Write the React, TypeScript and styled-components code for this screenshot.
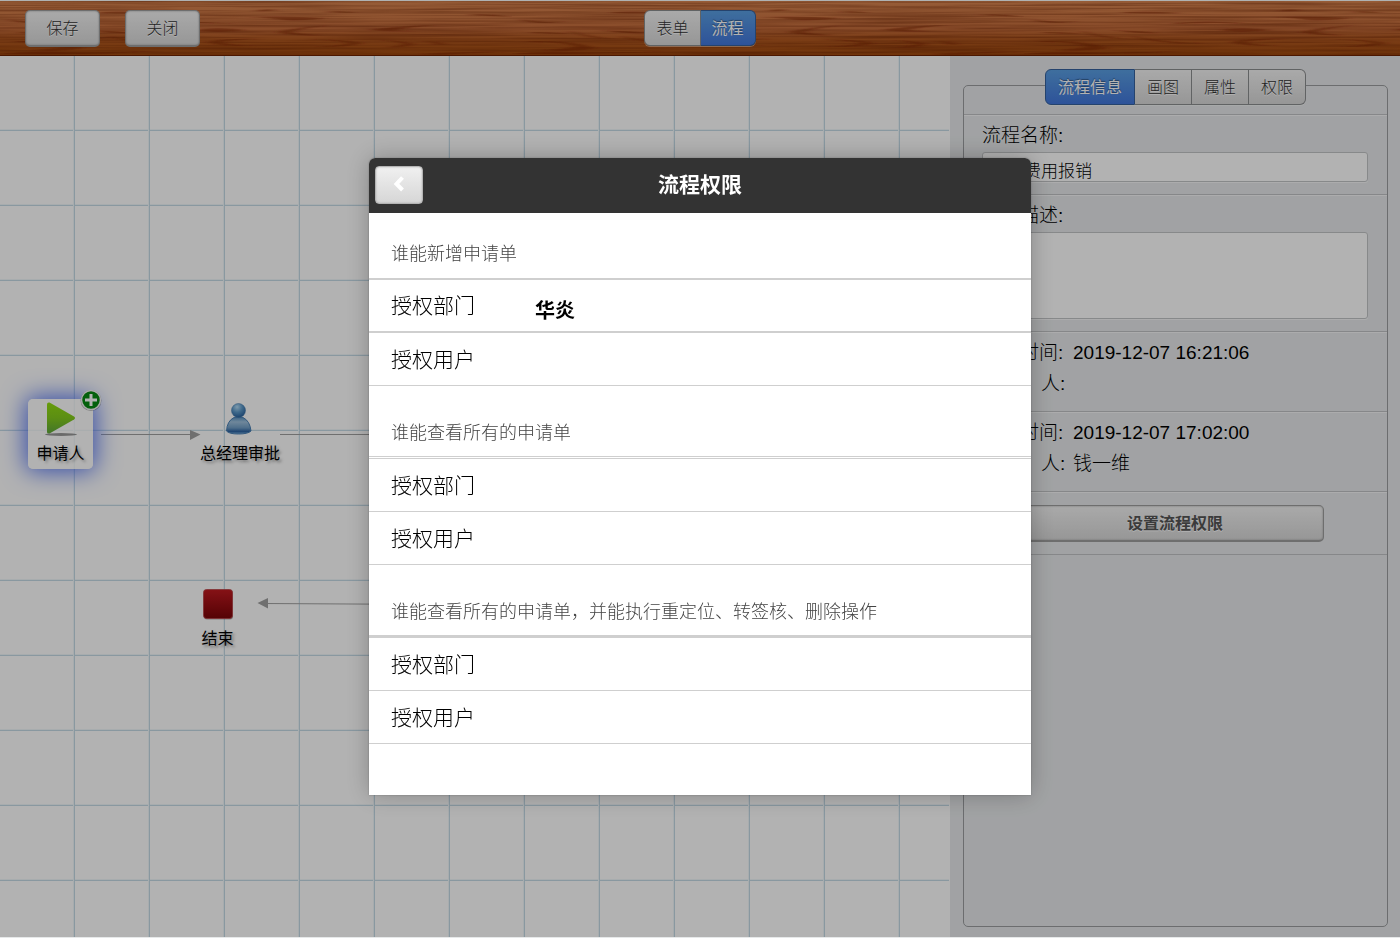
import React from "react";
import styled, { createGlobalStyle, css } from "styled-components";

const GlobalStyle = createGlobalStyle`
  *, *::before, *::after { box-sizing: border-box; }
  body {
    margin: 0;
    background: #e6e8e9;
    color: #000;
    font-family: "Liberation Sans", "Noto Sans CJK SC", sans-serif;
    font-size: 16px;
    font-weight: 300;
  }
  button, input, textarea { font-family: inherit; font-weight: inherit; }
  button { cursor: pointer; }
`;

const Page = styled.div`
  display: flex;
  flex-direction: column;
  min-height: 100vh;
  padding-bottom: 1px;
`;

const TopBar = styled.header`
  position: relative;
  display: grid;
  grid-template-columns: 1fr auto 1fr;
  align-items: start;
  height: 56px;
  padding: 9px 25px 0;
  border-top: 1px solid #fbffff;
`;

const Wood = styled.svg`
  position: absolute;
  inset: 0;
  width: 100%;
  height: 100%;
  z-index: -1;
`;

const Actions = styled.div`
  display: flex;
  gap: 25px;
`;

const softFace = css`
  color: #333;
  background: linear-gradient(#f3f3f3, #d8d8d8);
  text-shadow: 0 1px 0 #fff;
`;

const PushButton = styled.button<{ $bold?: boolean; $width: string }>`
  ${softFace}
  display: block;
  width: ${(p) => p.$width};
  height: 37px;
  padding: 0 0 2px;
  border: 1px solid #9e9e9e;
  border-bottom-width: 2px;
  border-radius: 5px;
  font-size: 16px;
  font-weight: ${(p) => (p.$bold ? 700 : 300)};
  box-shadow: inset 0 0 2px #999;
  ${(p) => p.$bold && "color: #555;"}
`;

const Segments = styled.div`
  display: flex;
`;

const Segment = styled.button<{ $active?: boolean; $roomy?: boolean }>`
  height: 36px;
  padding: 0 ${(p) => (p.$roomy ? 12 : 11)}px 2px;
  border: 1px solid #8c8e90;
  border-left-width: 0;
  font-size: 16px;
  box-shadow: 0 1px 0 rgba(255, 255, 255, 0.4);
  ${softFace}
  ${(p) =>
    p.$active &&
    css`
      color: #fff;
      border-color: #35609c;
      background: linear-gradient(#5a9fe2, #4277dc);
      font-weight: 400;
      text-shadow: 0 -1px 1px rgba(0, 0, 0, 0.4);
    `}
  &:first-child {
    border-left-width: 1px;
    border-radius: 6px 0 0 6px;
  }
  &:last-child {
    border-radius: 0 6px 6px 0;
  }
`;

const Workspace = styled.div`
  display: flex;
  flex: 1;
`;

const Canvas = styled.main`
  position: relative;
  flex: 1;
  min-width: 0;
  overflow: hidden;
  border-right: 1px solid #fff;
  background:
    repeating-linear-gradient(90deg, transparent 0 73px, #f0f6fa 73px 74px, #c4dae6 74px 75px),
    repeating-linear-gradient(180deg, transparent 0 73px, #f0f6fa 73px 74px, #c4dae6 74px 75px),
    #fff;
`;

const Connectors = styled.svg`
  position: absolute;
  top: 0;
  left: 0;
  width: 100%;
  height: 100%;
`;

const Node = styled.div<{ $x: number; $y: number; $selected?: boolean }>`
  position: absolute;
  left: ${(p) => p.$x}px;
  top: ${(p) => p.$y}px;
  display: flex;
  flex-direction: column;
  align-items: center;
  min-width: 65px;
  height: 70px;
  padding-top: 2px;
  border-radius: 5px;
  font-weight: 400;
  line-height: 26px;
  white-space: nowrap;
  text-shadow: 2px 2px 3px rgba(0, 0, 0, 0.4);
  ${(p) =>
    p.$selected &&
    css`
      background: rgba(255, 255, 255, 0.8);
      box-shadow: 0 0 24px 2px #4a6cf0;
    `}
`;

const NodeIcon = styled.svg`
  display: block;
  width: 36px;
  height: 40px;
`;

const Badge = styled.button`
  position: absolute;
  top: -10px;
  right: -9px;
  width: 22px;
  height: 22px;
  padding: 0;
  border: 0;
  background: none;
  svg { display: block; }
`;

const SidePanel = styled.aside`
  flex: 0 0 450px;
  display: flex;
  padding: 29px 12px 10px 13px;
  background: #e7e9eb;
`;

const Frame = styled.section`
  flex: 1;
  border: 1px solid #9b9da0;
  border-radius: 5px;
`;

const FrameHead = styled.div`
  display: flex;
  justify-content: center;
  height: 29px;
  border-bottom: 1px solid #c0c2c4;
  ${Segments} { margin-top: -17px; }
`;

const Block = styled.div`
  padding: 0 19px 12px 18px;
  border-top: 1px solid #f6f7f8;
  border-bottom: 1px solid #c0c2c4;
`;

const FieldLabel = styled.label`
  display: block;
  padding-top: 4px;
  font-size: 19px;
  line-height: 32px;
`;

const fieldBox = css`
  display: block;
  width: 100%;
  padding: 4px 7px 0;
  border: 1px solid #c2c4c6;
  border-radius: 3px;
  background: #fff;
  color: #000;
  font-size: 17px;
  outline: 0;
  box-shadow: 0 1px 0 #f6f7f8;
`;

const TextField = styled.input`
  ${fieldBox}
  height: 30px;
`;

const TextBox = styled.textarea`
  ${fieldBox}
  height: 87px;
  resize: none;
`;

const Facts = styled.dl`
  display: grid;
  grid-template-columns: 91px 1fr;
  margin: 0;
  padding-top: 4px;
  font-size: 19px;
  line-height: 31px;
  dt, dd { margin: 0; white-space: pre; }
`;

const ButtonSlot = styled.div`
  display: flex;
  justify-content: center;
  padding-top: 12px;
`;

const Overlay = styled.div`
  position: fixed;
  inset: 0 0 1px;
  display: flex;
  justify-content: center;
  align-items: flex-start;
  padding-top: 158px;
  background: rgba(0, 0, 0, 0.3);
`;

const Dialog = styled.div`
  width: 662px;
  max-width: 100%;
  padding-bottom: 51px;
  border-radius: 6px 6px 0 0;
  background: #fff;
  box-shadow: 0 0 24px rgba(0, 0, 0, 0.25), 0 0 2px rgba(0, 0, 0, 0.3);
`;

const DialogHead = styled.header`
  display: grid;
  grid-template-columns: 48px 1fr 48px;
  align-items: center;
  height: 55px;
  padding: 0 6px 1px;
  border-radius: 6px 6px 0 0;
  background: #333;
`;

const BackButton = styled.button`
  display: flex;
  align-items: center;
  justify-content: center;
  height: 38px;
  padding: 0 0 2px;
  border: 1px solid #b4b4b4;
  border-radius: 4px;
  background: linear-gradient(#f0f0f0, #d6d6d6);
  box-shadow: inset 0 0 2px #aaa;
`;

const Title = styled.h1`
  margin: 0;
  padding-bottom: 4px;
  color: #fff;
  font-size: 21px;
  font-weight: 700;
  text-align: center;
`;

const Group = styled.section`
  & + & { padding-top: 6px; }
`;

const GroupTitle = styled.h2<{ $rule: string }>`
  height: 67px;
  margin: 0;
  padding: 29px 22px 0;
  border-bottom: ${(p) => p.$rule} #cfcfcf;
  color: #444;
  font-size: 18px;
  font-weight: 300;
  line-height: 24px;
`;

const Row = styled.div<{ $thick?: boolean }>`
  display: grid;
  grid-template-columns: 144px 1fr;
  align-items: center;
  height: 53px;
  padding: 0 22px 3px;
  border-bottom: ${(p) => (p.$thick ? 2 : 1)}px solid #cfcfcf;
  font-size: 21px;
`;

const RowValue = styled.strong`
  padding-top: 10px;
  font-size: 20px;
  font-weight: 700;
`;

const grain = [
  "M8 18 Q28 22 54 20 Q30 24 12 20Z",
  "M20 31 Q45 31 60 33 Q40 33 20 32Z",
  "M58 30 Q80 36 104 38 Q78 38 58 31Z",
  "M92 29 Q110 33 134 32 Q112 29 92 30Z",
  "M16 40 Q60 39 84 47 Q64 51 30 49 Q66 47 62 45 Q50 41 16 41Z",
  "M110 35 Q140 42 180 42 Q140 44 110 36Z",
  "M100 11 Q130 10 156 12 Q128 13 100 12Z",
  "M150 22 Q190 19 235 23 Q190 21 150 23Z",
  "M200 28 Q224 26 246 29 Q224 32 200 30Z",
  "M255 10 Q264 7 277 9 Q264 11 255 10Z",
  "M326 11 Q342 9 358 12 Q342 12 326 11Z",
  "M248 16 Q290 15 328 17 Q308 20 284 19 Q266 16 248 16Z",
  "M276 31 Q300 26 330 24 Q300 28 292 31 Q300 33 320 34 Q292 35 276 31Z",
  "M370 29 Q392 25 436 24 Q404 27 396 29 Q404 30 420 30 Q386 31 370 29Z",
  "M208 41 Q222 37 262 38 Q226 39 222 41 Q230 44 256 45 Q214 45 208 41Z",
  "M310 38 Q350 39 362 42 Q352 46 316 46 Q346 44 348 42 Q342 40 310 38Z",
  "M380 39 Q406 40 414 43 Q404 47 388 46 Q404 44 404 43 Q400 41 380 39Z",
  "M424 40 Q440 40 446 44 Q436 44 434 42Z",
  "M466 14 Q490 12 512 16 Q488 15 466 14Z",
  "M0 53 Q24 50 60 51 Q110 52 160 50 Q110 53 60 53Z",
  "M420 53 Q460 50 512 51 Q470 52 440 54Z",
];

function WoodTexture() {
  return (
    <Wood aria-hidden="true">
      <defs>
        <linearGradient id="woodTone" x1="0" y1="0" x2="0" y2="1">
          <stop offset="0" stopColor="#d88550" />
          <stop offset="0.5" stopColor="#c56d3c" />
          <stop offset="0.7" stopColor="#b05820" />
          <stop offset="1" stopColor="#a04a0e" />
        </linearGradient>
        <filter id="woodFibre" x="0" y="0" width="100%" height="100%" colorInterpolationFilters="sRGB">
          <feTurbulence type="fractalNoise" baseFrequency="0.006 0.45" numOctaves="3" seed="8" />
          <feColorMatrix values="0 0 0 0 0.4  0 0 0 0 0.12  0 0 0 0 0  0.9 0 0 0 -0.3" />
        </filter>
        <filter id="grainBlur">
          <feGaussianBlur stdDeviation="4 0.5" />
        </filter>
        <pattern id="woodGrain" width="512" height="55" patternUnits="userSpaceOnUse">
          <g fill="#7a2400" fillOpacity="0.5" filter="url(#grainBlur)">
            {grain.map((d) => (
              <path key={d} d={d} />
            ))}
          </g>
        </pattern>
      </defs>
      <rect width="100%" height="100%" fill="url(#woodTone)" />
      <rect width="100%" height="100%" filter="url(#woodFibre)" />
      <rect width="100%" height="100%" fill="url(#woodGrain)" />
      <rect y="54" width="100%" height="1" fill="#6e2200" />
    </Wood>
  );
}

function PlayIcon() {
  return (
    <NodeIcon viewBox="0 0 36 40" aria-hidden="true">
      <defs>
        <linearGradient id="play" x1="0" y1="0" x2="0" y2="1">
          <stop offset="0" stopColor="#93df10" />
          <stop offset="0.5" stopColor="#84cc1c" />
          <stop offset="1" stopColor="#5fa83c" />
        </linearGradient>
      </defs>
      <ellipse cx="18" cy="33.500" rx="16" ry="1.5" fill="#555" opacity="0.6" />
      <path d="M4 3.500 Q4 1 6.500 1.500 L31 15.500 Q33 17 31 18.500 L6.500 32.500 Q4 33 4 31Z" fill="url(#play)" />
    </NodeIcon>
  );
}

function PersonIcon() {
  return (
    <NodeIcon viewBox="0 0 36 40" aria-hidden="true">
      <defs>
        <radialGradient id="head" cx="0.4" cy="0.25" r="0.75">
          <stop offset="0" stopColor="#b4dcf6" />
          <stop offset="0.5" stopColor="#5b98c8" />
          <stop offset="1" stopColor="#2a629e" />
        </radialGradient>
        <linearGradient id="body" x1="0" y1="0" x2="0" y2="1">
          <stop offset="0" stopColor="#4f8abc" />
          <stop offset="0.3" stopColor="#a0c2de" />
          <stop offset="0.65" stopColor="#6f9dc6" />
          <stop offset="0.85" stopColor="#2d63a2" />
          <stop offset="1" stopColor="#74aad8" />
        </linearGradient>
      </defs>
      <path d="M4.500 30 Q5 20 12 16.500 Q16.500 15 21 16.500 Q28 20 29 30 Q26 33 16.500 33 Q7 33 4.500 30Z" fill="url(#body)" stroke="#4a80b4" strokeWidth="1" />
      <circle cx="16.500" cy="9.500" r="7" fill="url(#head)" stroke="#3f76aa" strokeWidth="0.500" />
    </NodeIcon>
  );
}

function StopIcon() {
  return (
    <NodeIcon viewBox="0 0 36 40" aria-hidden="true">
      <defs>
        <linearGradient id="stop" x1="0" y1="0" x2="0" y2="1">
          <stop offset="0" stopColor="#c01a20" />
          <stop offset="1" stopColor="#7a0408" />
        </linearGradient>
      </defs>
      <rect x="4" y="4.500" width="29" height="29" rx="3" fill="#000" opacity="0.3" />
      <rect x="3.500" y="3.500" width="29" height="29" rx="3" fill="url(#stop)" stroke="#b8454a" strokeWidth="0.800" />
    </NodeIcon>
  );
}

const groups = [
  {
    title: "谁能新增申请单",
    rule: "2px solid",
    rows: [
      { label: "授权部门", value: "华炎", thick: true },
      { label: "授权用户" },
    ],
  },
  {
    title: "谁能查看所有的申请单",
    rule: "3px double",
    rows: [{ label: "授权部门" }, { label: "授权用户" }],
  },
  {
    title: "谁能查看所有的申请单，并能执行重定位、转签核、删除操作",
    rule: "3px solid",
    rows: [{ label: "授权部门" }, { label: "授权用户" }],
  },
];

export default function App() {
  return (
    <>
      <GlobalStyle />
      <Page>
        <TopBar>
          <WoodTexture />
          <Actions>
            <PushButton $width="75px">保存</PushButton>
            <PushButton $width="75px">关闭</PushButton>
          </Actions>
          <Segments>
            <Segment>表单</Segment>
            <Segment $active>流程</Segment>
          </Segments>
        </TopBar>
        <Workspace>
          <Canvas>
            <Connectors aria-hidden="true">
              <g stroke="#a0a0a0" strokeWidth="1" fill="#a0a0a0">
                <path d="M101 378.500H192M280 378.500H620M262 547.500L620 549.500" />
                <path d="M190 374L200.500 378.500L190 384Z M268 542L257.500 547L268 552.500Z" stroke="none" />
              </g>
            </Connectors>
            <Node $x={28} $y={343} $selected>
              <PlayIcon />
              申请人
              <Badge aria-label="添加">
                <svg width="22" height="22" viewBox="0 0 22 22">
                  <circle cx="11" cy="11.500" r="10.500" fill="#000" opacity="0.3" />
                  <circle cx="11" cy="11" r="9.500" fill="#078a12" stroke="#f4f4f4" strokeWidth="1.500" />
                  <path d="M11 5V17M5 11H17" stroke="#fff" strokeWidth="3" />
                </svg>
              </Badge>
            </Node>
            <Node $x={200} $y={343}>
              <PersonIcon />
              总经理审批
            </Node>
            <Node $x={185} $y={528}>
              <StopIcon />
              结束
            </Node>
          </Canvas>
          <SidePanel>
            <Frame>
              <FrameHead>
                <Segments>
                  <Segment $roomy $active>流程信息</Segment>
                  <Segment $roomy>画图</Segment>
                  <Segment $roomy>属性</Segment>
                  <Segment $roomy>权限</Segment>
                </Segments>
              </FrameHead>
              <Block>
                <FieldLabel htmlFor="flow-name">流程名称:</FieldLabel>
                <TextField id="flow-name" defaultValue="日常费用报销" />
              </Block>
              <Block>
                <FieldLabel htmlFor="flow-desc">流程描述:</FieldLabel>
                <TextBox id="flow-desc" />
              </Block>
              <Block>
                <Facts>
                  <dt>创建时间:</dt>
                  <dd>2019-12-07 16:21:06</dd>
                  <dt>{"创  建  人:"}</dt>
                  <dd />
                </Facts>
              </Block>
              <Block>
                <Facts>
                  <dt>修改时间:</dt>
                  <dd>2019-12-07 17:02:00</dd>
                  <dt>{"修  改  人:"}</dt>
                  <dd>钱一维</dd>
                </Facts>
              </Block>
              <Block>
                <ButtonSlot>
                  <PushButton $bold $width="298px">设置流程权限</PushButton>
                </ButtonSlot>
              </Block>
            </Frame>
          </SidePanel>
        </Workspace>
      </Page>
      <Overlay>
        <Dialog role="dialog" aria-labelledby="dialog-title">
          <DialogHead>
            <BackButton aria-label="返回">
              <svg width="12" height="18" viewBox="0 0 12 18">
                <path d="M9.500 2.500L3.500 9L9.500 15" fill="none" stroke="#fff" strokeWidth="4" />
              </svg>
            </BackButton>
            <Title id="dialog-title">流程权限</Title>
          </DialogHead>
          {groups.map((group) => (
            <Group key={group.title}>
              <GroupTitle $rule={group.rule}>{group.title}</GroupTitle>
              {group.rows.map((row) => (
                <Row key={row.label} $thick={row.thick}>
                  <span>{row.label}</span>
                  {row.value && <RowValue>{row.value}</RowValue>}
                </Row>
              ))}
            </Group>
          ))}
        </Dialog>
      </Overlay>
    </>
  );
}
